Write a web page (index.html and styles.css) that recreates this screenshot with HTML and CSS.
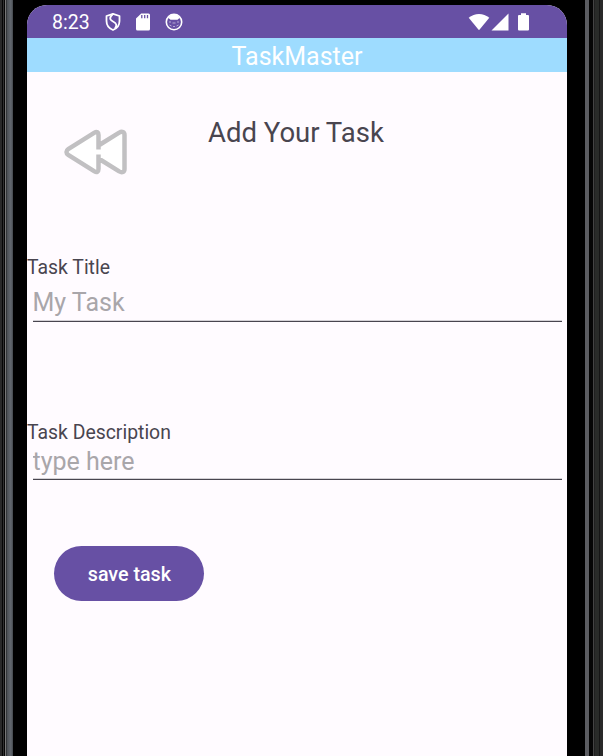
FILE: index.html
```
<!DOCTYPE html>
<html lang="en">
<head>
<meta charset="utf-8">
<title>TaskMaster</title>
<link rel="stylesheet" href="styles.css">
</head>
<body>
<div class="device">
  <div class="edge-left"></div>
  <main class="screen">
    <div class="status">
      <span class="time">8:23</span>
      <svg class="shield" width="16" height="20" viewBox="0 0 16 20" fill="none" stroke="#fff" stroke-width="1.8" stroke-linejoin="round"><path d="M8 1.800 14.500 4v5c0 4.200-2.500 7.400-6.500 9C4 16.400 1.500 13.200 1.500 9V4Z"/><path d="M8 2C4.500 5 4 7.500 8 9.500S12 13.500 10 16.500"/></svg>
      <svg class="sd" width="14" height="18" viewBox="0 0 14 18"><path fill="#fff" d="M5.200.5H12.500Q14 .5 14 2V16Q14 17.500 12.500 17.500H1.500Q0 17.500 0 16V5.500Z"/><path stroke="#6750a4" stroke-width="1.300" d="M5.800 2v3.200M8.700 2v3.200M11.500 2v3.200"/></svg>
      <svg class="cat" width="18" height="18" viewBox="0 0 18 18"><circle cx="9" cy="9" r="7.700" fill="none" stroke="#fff" stroke-width="1.600"/><path fill="#fff" d="M2 7Q4 1.500 9 1.500T16 7L14.500 5 12.500 6.800H5.500L3.500 5Z"/><path d="M4 9h2m1.500 1h3m1.500-1h2M4.500 12l2 1m5 0 2-1M8 13.500h2" stroke="#cbc1e2" stroke-width=".8"/></svg>
      <span class="spacer"></span>
      <svg class="wifi" width="22" height="18" viewBox="0 0 22 18"><path fill="#fff" d="M.7 4.700C6.500-.4 15.500-.4 21.300 4.700L11 17.300Z"/></svg>
      <svg class="signal" width="18" height="18" viewBox="0 0 18 18"><path fill="#fff" d="M17.500.5v17H.5Z"/></svg>
      <svg class="battery" width="11" height="18" viewBox="0 0 11 18"><path fill="#fff" d="M3 .3h5v1.700h2q1 0 1 1v13.500q0 1-1 1H1q-1 0-1-1V3q0-1 1-1h2Z"/></svg>
    </div>
    <header class="appbar">TaskMaster</header>
    <div class="heading">
      <svg class="back" width="64" height="46" viewBox="0 0 64 46" fill="#fff" stroke="#c1c0c2" stroke-width="4.500" stroke-linejoin="round"><path d="M34.500 16.500V6c0-2.700-1.700-3.700-4-2.400L4.200 20.200c-2.300 1.500-2.300 4.100 0 5.600l26.300 16.600c2.300 1.300 4 .3 4-2.400V29.500l20.700 12.900c3 1.700 5.300.6 5.300-2.400V6c0-3-2.300-4.100-5.300-2.400L34.500 16.500v4M34.500 29.500v-4"/></svg>
      <h1>Add Your Task</h1>
    </div>
    <section class="field title-field">
      <label for="title">Task Title</label>
      <input id="title" type="text" placeholder="My Task">
    </section>
    <section class="field description-field">
      <label for="description">Task Description</label>
      <input id="description" type="text" placeholder="type here">
    </section>
    <button class="save">save task</button>
  </main>
  <div class="edge-right"></div>
</div>
</body>
</html>
```
FILE: styles.css
```
* { box-sizing: border-box; }
body {
  margin: 0;
  background: #000;
  font-family: Roboto, sans-serif;
  color: #49454f;
}
.device {
  display: grid;
  grid-template-columns: 27px 540px 36px;
  height: 756px;
  overflow: hidden;
}
.edge-left {
  background: linear-gradient(90deg, #292929 0 2px, #050505 2px 3px, #303030 3px 4px, #050505 4px 5px, #777 5px 6px, #34373a 6px 7px, #4b4f54 7px, #636970 11px, #50555b 12px, #44484d 13px, #000 13px);
}
.edge-right {
  background: linear-gradient(90deg, #000 0 18px, #5b5c61 18px 22px, #050505 22px 26px, #444 26px 27px, #202020 27px 28px, #292b29 28px 32px, #151515 32px 33px, #292929 33px);
}
.screen {
  margin-top: 5px;
  background: #fffbff;
  border-radius: 20px 20px 0 0;
  overflow: hidden;
}
.status {
  display: flex;
  align-items: center;
  height: 33px;
  padding: 0 38px 0 25px;
  background: #6750a4;
  color: #fff;
}
.time { width: 53px; padding-top: 2px; font-size: 19.500px; }
.shield { margin-right: 15px; }
.sd { margin-right: 14.500px; }
.spacer { flex: 1; }
.wifi { margin-right: 1px; }
.signal { margin-right: 9.500px; }
.appbar {
  height: 33.500px;
  background: #9edcff;
  color: #fff;
  font-size: 25px;
  line-height: 37px;
  text-align: center;
}
.heading {
  display: flex;
  align-items: flex-start;
  height: 184.500px;
  padding: 45px 0 0 37px;
}
.back { margin-top: 12px; }
h1 {
  margin: 0 0 0 80px;
  font-size: 27.500px;
  font-weight: 400;
  line-height: 31px;
}
.field { display: flex; flex-direction: column; }
.title-field { height: 165px; }
.description-field { height: 125px; }
label { font-size: 19.400px; line-height: 24px; }
input {
  width: 529px;
  height: 42px;
  margin: 0 0 0 5.500px;
  padding: 3px 0 0;
  border: 0;
  border-bottom: 1px solid #49454f;
  box-shadow: 0 -.5px 0 #aaa7ad inset;
  border-radius: 0;
  outline: 0;
  background: transparent;
  font: 25px Roboto, sans-serif;
}
input::placeholder { color: #a9a6aa; opacity: 1; }
.description-field input { height: 35px; padding: 0 0 2px; }
.save {
  display: block;
  width: 150px;
  height: 55px;
  margin-left: 27.400px;
  padding: 1px 0 0;
  border: 0;
  border-radius: 28px;
  background: #6750a4;
  color: #fff;
  font: 500 19.700px Roboto, sans-serif;
}
```
